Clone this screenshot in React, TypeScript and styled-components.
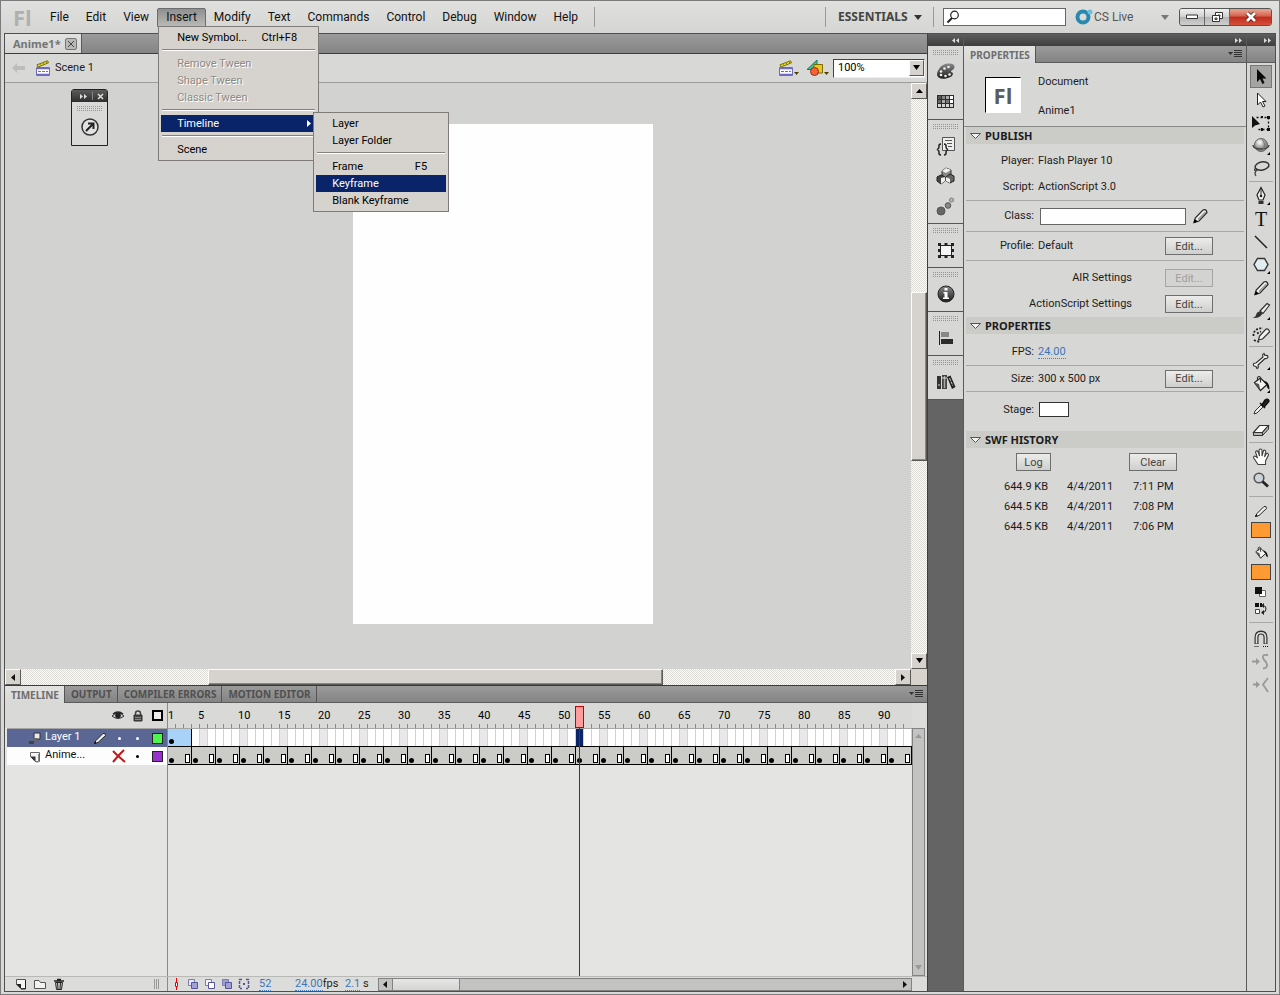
import React from "react";
import styled, { createGlobalStyle, css } from "styled-components";

const Global = createGlobalStyle`
  *, *::before, *::after { box-sizing: border-box; }
  body { margin: 0; background: #d6d6d4; }
  body, button, input, select, table {
    font-family: Roboto, "Noto Sans", sans-serif;
    font-size: 11px;
    line-height: 14px;
    color: #1c1c1c;
  }
  button { margin: 0; padding: 0; border: 0; background: none; cursor: pointer; }
  ul, h1, h2, p { margin: 0; padding: 0; list-style: none; }
  svg { flex: none; display: block; }
`;

const checker = "repeating-conic-gradient(#fdfdfb 0 25%, #dcdad4 0 50%) 0 0 / 2px 2px";
const boldFace = css`
  font-family: "Noto Sans", sans-serif;
  font-weight: 700;
`;

/* ---------- window ---------- */

const Window = styled.div`
  min-height: 100vh;
  display: flex;
  flex-direction: column;
  border: 1px solid #7b7b7b;
  background: #d8d8d6;
`;

const Header = styled.header`
  display: flex;
  align-items: center;
  height: 32px;
  background: linear-gradient(#e0e0de, #d5d5d3);
`;

const Logo = styled.span`
  ${boldFace}
  width: 40px;
  padding-left: 12px;
  font-family: "Open Sans", sans-serif;
  font-size: 22px;
  line-height: 26px;
  color: #b0b0b0;
`;

const MenuBar = styled.nav`
  display: flex;
  align-items: center;
  height: 20px;
  padding-right: 8px;
  border-right: 1px solid #9a9a9a;
`;

const MenuSlot = styled.div`
  position: relative;
  margin-right: -1px;
`;

const MenuButton = styled.button<{ $open?: boolean }>`
  height: 19px;
  padding: 0 8px;
  border: 1px solid ${(p) => (p.$open ? "#6c6c6c" : "transparent")};
  border-radius: 2px 2px 0 0;
  background: ${(p) => (p.$open ? "linear-gradient(#8f8f8f, #b9b9b7)" : "none")};
  font-size: 12px;
  line-height: 16px;
  color: #111;
`;

const Popup = styled.ul<{ $sub?: boolean }>`
  position: absolute;
  z-index: 5;
  top: ${(p) => (p.$sub ? "-3px" : "18px")};
  left: ${(p) => (p.$sub ? "152px" : "1px")};
  width: ${(p) => (p.$sub ? "136px" : "161px")};
  padding: 2px;
  border: 1px solid #7e7b78;
  background: #d6d3ce;
`;

const PopupItem = styled.li`
  position: relative;
`;

const PopupButton = styled.button<{ $active?: boolean }>`
  display: flex;
  align-items: center;
  justify-content: space-between;
  width: 100%;
  height: 17px;
  padding: 0 19px 0 16px;
  background: ${(p) => (p.$active ? "#0a246a" : "none")};
  color: ${(p) => (p.$active ? "#fff" : "#000")};
  line-height: 17px;
  &:disabled { color: #8c8a86; text-shadow: 1px 1px 0 #fff; }
  svg { margin-right: -14px; }
`;

const PopupRule = styled.li`
  height: 2px;
  margin: 3px 1px 4px;
  border-top: 1px solid #85827e;
  border-bottom: 1px solid #fff;
`;

const HeaderRight = styled.div`
  display: flex;
  align-items: center;
  height: 32px;
  margin-left: auto;
  padding-right: 7px;
`;

const Workspace = styled.button`
  ${boldFace}
  display: flex;
  align-items: center;
  justify-content: space-between;
  width: 109px;
  height: 20px;
  padding: 0 11px 0 12px;
  border-left: 1px solid #9a9a9a;
  border-right: 1px solid #9a9a9a;
  font-size: 12px;
  color: #444;
`;

const SearchBox = styled.label`
  display: flex;
  align-items: center;
  width: 123px;
  height: 18px;
  margin: 0 9px;
  padding-left: 2px;
  border: 1px solid #666;
  background: #fff;
  input { flex: 1; min-width: 0; border: 0; outline: 0; background: none; }
`;

const LiveButton = styled.button`
  display: flex;
  align-items: center;
  width: 94px;
  height: 20px;
  margin-right: 10px;
  font-size: 12px;
  color: #555;
  svg:last-child { margin-left: auto; }
`;

const WindowButtons = styled.div`
  display: flex;
  height: 18px;
  border: 1px solid #555;
  border-radius: 3px;
  overflow: hidden;
`;

const WindowButton = styled.button<{ $close?: boolean }>`
  display: flex;
  align-items: center;
  justify-content: center;
  width: ${(p) => (p.$close ? "41px" : "25px")};
  border-right: ${(p) => (p.$close ? "0" : "1px solid #666")};
  background: ${(p) =>
    p.$close
      ? "linear-gradient(#e59a88 0 10%, #d4614c 45%, #bf2c1c 50%, #d5503a)"
      : "linear-gradient(#efefef, #d2d2d2 48%, #b4b4b4 50%, #cfcfcf)"};
`;

const Body = styled.div`
  flex: 1;
  display: flex;
  margin: 0 3px 2px;
  border: 1px solid #4f4f4f;
`;

/* ---------- document ---------- */

const Main = styled.main`
  flex: 1;
  min-width: 0;
  display: flex;
  flex-direction: column;
  border-right: 1px solid #3f3f3f;
`;

const Strip = styled.div<{ $tall?: boolean }>`
  display: flex;
  height: ${(p) => (p.$tall ? "20px" : "17px")};
  border-bottom: 1px solid ${(p) => (p.$tall ? "#3c3c3c" : "#5c5c5c")};
  background: linear-gradient(#9b9b9b, #848484);
`;

const DocTab = styled.div`
  ${boldFace}
  display: flex;
  align-items: center;
  gap: 4px;
  height: 19px;
  padding: 0 4px 0 8px;
  border-right: 1px solid #5a5a5a;
  background: linear-gradient(#e2e2e0, #d6d6d4);
  color: #757575;
`;

const CloseTab = styled.button`
  display: flex;
  align-items: center;
  justify-content: center;
  width: 12px;
  height: 12px;
  border: 1px solid #777;
  border-radius: 2px;
  background: #b9b9b7;
`;

const SceneBar = styled.div`
  display: flex;
  align-items: center;
  height: 29px;
  padding: 0 2px 0 6px;
  border-bottom: 1px solid #9c9c9c;
  background: #d8d8d6;
`;

const SceneName = styled.button`
  display: flex;
  align-items: center;
  gap: 4px;
  margin: 0 auto 0 10px;
`;

const IconButton = styled.button`
  display: flex;
  align-items: center;
  justify-content: center;
  width: 24px;
  height: 22px;
  margin-right: 4px;
`;

const ZoomBox = styled.div`
  display: flex;
  width: 92px;
  height: 19px;
  border: 1px solid #444;
  border-right-color: #eee;
  border-bottom-color: #eee;
  background: #fff;
  select {
    flex: 1;
    appearance: none;
    border: 0;
    padding: 0 0 0 4px;
    outline: 0;
    background: #fff;
    color: #000;
  }
`;

const bevel = css`
  border: 1px solid;
  border-color: #fbfbf8 #5b5955 #5b5955 #fbfbf8;
  background: #d6d3ce;
`;

const BevelButton = styled.button<{ $narrow?: boolean }>`
  ${bevel}
  flex: none;
  display: flex;
  align-items: center;
  justify-content: center;
  width: ${(p) => (p.$narrow ? "15px" : "16px")};
  height: 16px;
`;

const CanvasGrid = styled.div`
  flex: 1;
  display: grid;
  grid-template: 1fr 16px / 1fr 16px;
`;

const Canvas = styled.div`
  position: relative;
  display: flex;
  justify-content: center;
  padding: 41px 0 45px 90px;
  background: #d2d3d1;
`;

const Stage = styled.div`
  width: 300px;
  height: 500px;
  background: #fdfefd;
`;

const ScrollBar = styled.div<{ $vertical?: boolean }>`
  display: flex;
  flex-direction: ${(p) => (p.$vertical ? "column" : "row")};
  background: ${checker};
`;

const Spacer = styled.span<{ $grow: number }>`
  flex: ${(p) => p.$grow} 1 0;
`;

const Thumb = styled(Spacer)`
  ${bevel}
  box-shadow: inset -1px -1px #8a8783;
`;

const Corner = styled.div`
  background: #d8d3cd;
`;

const FloatPanel = styled.div`
  position: absolute;
  top: 6px;
  left: 66px;
  width: 37px;
  height: 57px;
  border: 1px solid #222;
  border-radius: 3px 3px 0 0;
  background: #d9d9d7;
`;

const FloatBar = styled.div`
  display: flex;
  align-items: center;
  justify-content: flex-end;
  gap: 4px;
  height: 12px;
  padding-right: 3px;
  background: linear-gradient(#5c5c5c, #2e2e2e);
`;

const Grip = styled.div`
  height: 5px;
  margin: 4px 4px 0;
  background: conic-gradient(#959593 25%, transparent 0) 0 0 / 2px 2px;
`;

const FloatBody = styled.div`
  display: flex;
  justify-content: center;
  padding-top: 6px;
`;

/* ---------- timeline ---------- */

const Timeline = styled.section`
  border-top: 1px solid #3a3a3a;
  background: #dcdcda;
`;

const Tab = styled.button<{ $active?: boolean }>`
  ${boldFace}
  height: ${(p) => (p.$active ? "17px" : "16px")};
  padding: 0 5px 0 6px;
  border-right: 1px solid #555;
  background: ${(p) => (p.$active ? "linear-gradient(#e2e2e0, #d8d8d6)" : "none")};
  font-size: 10px;
  line-height: 16px;
  color: ${(p) => (p.$active ? "#6e6e6e" : "#505050")};
`;

const PanelMenu = styled.button`
  display: flex;
  align-items: center;
  margin-left: auto;
  padding-right: 4px;
`;

const TimelineBody = styled.div`
  display: flex;
`;

const LayerColumn = styled.div`
  width: 163px;
  padding-left: 2px;
  border-right: 1px solid #8a8a8a;
  background: linear-gradient(#d9d9d7 25px, #e4e4e2 25px);
`;

const LayerHead = styled.div`
  display: grid;
  grid-template-columns: 1fr 20px 19px 20px;
  align-items: center;
  justify-items: center;
  height: 26px;
  border-bottom: 1px solid #a5a5a5;
`;

const LayerRow = styled.div<{ $active?: boolean }>`
  display: grid;
  grid-template-columns: 38px 1fr 20px 18px 19px 20px;
  align-items: center;
  justify-items: center;
  height: 18px;
  background: ${(p) => (p.$active ? "#5a6794" : "#fdfdfd")};
  color: ${(p) => (p.$active ? "#fff" : "#111")};
  line-height: 16px;
  span { justify-self: start; height: 18px; }
  svg:first-child { justify-self: end; margin-right: 4px; }
`;

const Dot = styled.i<{ $c: string }>`
  width: 3px;
  height: 3px;
  border-radius: 2px;
  background: ${(p) => p.$c};
`;

const Swatch = styled.i<{ $c: string }>`
  width: 11px;
  height: 11px;
  border: 1px solid #222;
  background: ${(p) => p.$c};
`;

const Frames = styled.div`
  position: relative;
  flex: 1;
  min-width: 0;
  overflow: hidden;
`;

const Ruler = styled.div`
  display: flex;
  height: 26px;
  padding-top: 6px;
  border-bottom: 1px solid #a5a5a5;
  background:
    repeating-linear-gradient(90deg, transparent 0 7px, #8b8b8b 7px 8px) 0 21px / 736px 4px no-repeat,
    #d9d9d7;
  color: #000;
`;

const Mark = styled.span<{ $first?: boolean }>`
  flex: none;
  width: ${(p) => (p.$first ? "30px" : "40px")};
`;

const FrameRow = styled.div`
  display: flex;
  height: 18px;
  border-bottom: 1px solid #000;
  background:
    repeating-linear-gradient(90deg, transparent 0 7px, #d2d2ce 7px 8px),
    repeating-linear-gradient(90deg, #fff 0 32px, #eae7eb 32px 40px);
`;

const Tween = styled.div`
  display: flex;
  align-items: flex-end;
  width: 24px;
  padding: 0 0 2px 1px;
  border-right: 1px solid #000;
  background: #a9d2f8;
`;

const SelectedFrame = styled.i`
  width: 7px;
  margin-left: 384px;
  background: #0a246a;
`;

const Key = styled.i`
  width: 5px;
  height: 5px;
  border-radius: 3px;
  background: #000;
`;

const SpanRow = styled.div`
  display: flex;
  height: 18px;
  border-bottom: 1px solid #000;
`;

const FrameSpan = styled.div`
  flex: none;
  display: flex;
  align-items: flex-end;
  justify-content: space-between;
  width: 24px;
  padding: 0 1px 1px;
  border-right: 1px solid #000;
  background: #cbccc8;
`;

const EndMark = styled.i`
  width: 5px;
  height: 9px;
  border: 1px solid #000;
  background: #fff;
`;

const EmptyFrames = styled.div`
  height: 211px;
  background: #e4e4e2;
`;

const Playhead = styled.div`
  position: absolute;
  top: 3px;
  bottom: 0;
  left: 407px;
  width: 9px;
  background: linear-gradient(#c40000, #c40000) 4px 0 / 1px 100% no-repeat;
  &::before {
    content: "";
    display: block;
    height: 22px;
    border: 1px solid #c40000;
    background: #ff9c9c;
  }
`;

const SlimScroll = styled.div`
  display: flex;
  flex-direction: column;
  align-items: center;
  justify-content: space-between;
  width: 13px;
  margin: 25px 2px 0 0;
  padding: 5px 0;
  border: 1px solid #828282;
  background: #c3c3c1;
`;

const TimelineFoot = styled.footer`
  display: flex;
  align-items: center;
  height: 15px;
  border-top: 1px solid #b9b9b7;
  background: #dcdcda;
`;

const FootTools = styled.div<{ $frames?: boolean }>`
  display: flex;
  align-items: center;
  gap: ${(p) => (p.$frames ? "5px" : "7px")};
  width: ${(p) => (p.$frames ? "91px" : "163px")};
  height: 14px;
  padding: ${(p) => (p.$frames ? "0 0 0 4px" : "0 7px 0 10px")};
  border-right: ${(p) => (p.$frames ? "0" : "1px solid #8a8a8a")};
  button { display: flex; }
  & > svg { margin-left: auto; }
`;

const Readout = styled.span<{ $w: number }>`
  width: ${(p) => p.$w}px;
  line-height: 12px;
`;

const HotText = styled.a`
  border-bottom: 1px dotted #4a80c0;
  color: #3c76bc;
  text-decoration: none;
`;

const FrameScroll = styled.div`
  flex: 1;
  display: flex;
  align-items: center;
  height: 13px;
  margin-right: 15px;
  padding: 0 4px;
  border: 1px solid #828282;
  background: #c3c3c1;
`;

const FrameThumb = styled.span`
  width: 68px;
  height: 11px;
  margin: 0 auto 0 5px;
  border: solid #828282;
  border-width: 0 1px;
  background: linear-gradient(#e6e6e6, #d5d5d3);
`;

/* ---------- docked columns ---------- */

const Dock = styled.aside<{ $w: number; $last?: boolean }>`
  flex: none;
  display: flex;
  flex-direction: column;
  width: ${(p) => p.$w}px;
  border-right: ${(p) => (p.$last ? "0" : "1px solid #5a5a5a")};
  background: #d7d7d5;
`;

const DockBar = styled.div`
  display: flex;
  align-items: center;
  justify-content: flex-end;
  height: 12px;
  padding-right: 3px;
  background: linear-gradient(#5e5e5e, #3d3d3d);
`;

const RailGroup = styled.div`
  display: flex;
  flex-direction: column;
  padding-bottom: 2px;
  border-bottom: 1px solid #555;
`;

const RailGrip = styled(Grip)`
  margin: 4px 4px 2px;
`;

const RailButton = styled.button`
  display: flex;
  align-items: center;
  justify-content: center;
  height: 30px;
`;

const RailRest = styled.div`
  flex: 1;
  background: #646464;
`;

const DocInfo = styled.div`
  display: flex;
  height: 64px;
  padding: 14px 0 0 21px;
  border-bottom: 1px solid #8a8a8a;
`;

const DocLogo = styled.div`
  ${boldFace}
  display: flex;
  align-items: center;
  justify-content: center;
  width: 36px;
  height: 36px;
  margin-right: 17px;
  border: 1px solid #fff;
  border-color: #000 #fff #fff #000;
  background: #fff;
  font-family: "Open Sans", sans-serif;
  font-size: 22px;
  color: #5c5c5c;
`;

const DocNames = styled.div`
  display: flex;
  flex-direction: column;
  gap: 15px;
  margin-top: -2px;
`;

const SectionHead = styled.button`
  ${boldFace}
  display: flex;
  align-items: center;
  gap: 3px;
  height: 17px;
  margin: 0 2px;
  padding-left: 3px;
  background: #cbcbc8;
`;

const Block = styled.div<{ $end?: boolean }>`
  display: flex;
  flex-direction: column;
  margin: 0 2px;
  padding: 4px 0 ${(p) => (p.$end ? "4px" : "0")};
`;

const Field = styled.div<{ $h: number; $rule?: boolean; $wide?: boolean; $aside?: number }>`
  display: grid;
  grid-template-columns: ${(p) => (p.$wide ? "166px" : "68px 1fr")} ${(p) => p.$aside ?? 79}px;
  column-gap: ${(p) => (p.$wide ? "33px" : "4px")};
  align-items: center;
  height: ${(p) => p.$h}px;
  border-bottom: ${(p) => (p.$rule ? "1px solid #a9a7a7" : "0")};
  & > label, & > b { font-weight: 400; text-align: right; }
`;

const ClassInput = styled.input`
  width: 100%;
  height: 17px;
  margin-left: 2px;
  padding: 0 3px;
  border: 1px solid #666;
  background: #fdfefd;
`;

const PushButton = styled.button<{ $w?: number }>`
  width: ${(p) => p.$w ?? 48}px;
  height: 18px;
  border: 1px solid #6e6e6e;
  background: linear-gradient(#ececea, #cfcfcd);
  line-height: 15px;
  color: #444;
  &:disabled { border-color: #a5a5a3; background: #d3d3d1; color: #a0a09e; }
`;

const StageColor = styled.button`
  width: 30px;
  height: 15px;
  margin-left: 1px;
  border: 1px solid #333;
  background: #fff;
`;

const HistoryButtons = styled.div`
  display: flex;
  gap: 78px;
  padding: 1px 0 6px 50px;
`;

const History = styled.table`
  width: 190px;
  margin-left: 38px;
  border-collapse: collapse;
  td { height: 20px; padding: 0; }
  td:first-child { width: 63px; }
  td:nth-child(2) { width: 66px; }
`;

const ToolTop = styled.div`
  height: 17px;
  border-bottom: 1px solid #5c5c5c;
  background: linear-gradient(#9b9b9b, #848484);
`;

const ToolGroup = styled.div<{ $gap?: number; $end?: boolean }>`
  display: flex;
  flex-direction: column;
  align-items: center;
  margin: 0 2px;
  padding: ${(p) => (p.$end ? "4px" : "2px")} 0 ${(p) => p.$gap ?? 1}px;
  border-bottom: ${(p) => (p.$end ? "0" : "1px solid #a9a7a7")};
`;

const ToolButton = styled.button<{ $active?: boolean; $h?: number }>`
  display: flex;
  align-items: center;
  justify-content: center;
  width: 22px;
  height: ${(p) => p.$h ?? 23}px;
  border: 1px solid ${(p) => (p.$active ? "#777" : "transparent")};
  background: ${(p) => (p.$active ? "#a4a4a2" : "none")};
`;

const ColorSwatch = styled.button`
  width: 20px;
  height: 16px;
  margin: 0 0 3px;
  border: 1px solid #444;
  background: #ff9a33;
`;

/* ---------- drawings ---------- */

type Kids = { children: React.ReactNode; w?: number; h?: number };
const Svg = ({ children, w = 20, h = 20 }: Kids) => (
  <svg width={w} height={h} viewBox={`0 0 ${w} ${h}`} fill="none" stroke="none" aria-hidden="true">
    {children}
  </svg>
);

const Caret = ({ c = "#333", w = 8 }: { c?: string; w?: number }) => (
  <Svg w={w} h={5}><path d={`M0 0H${w}L${w / 2} 5Z`} fill={c} /></Svg>
);
const ArrowUp = ({ c = "#000" }: { c?: string }) => (
  <Svg w={7} h={4}><path d="M0 4H7L3.500 0Z" fill={c} /></Svg>
);
const ArrowLeft = () => <Svg w={4} h={7}><path d="M4 0V7L0 3.500Z" fill="#111" /></Svg>;
const ArrowRight = ({ c = "#111" }: { c?: string }) => (
  <Svg w={4} h={7}><path d="M0 0V7L4 3.500Z" fill={c} /></Svg>
);
const Collapse = ({ left }: { left?: boolean }) => (
  <Svg w={8} h={5}>
    <path d={left ? "M3 0V5L0 2.500ZM7 0V5L4 2.500Z" : "M0 0V5L3 2.500ZM4 0V5L7 2.500Z"} fill="#ddd" />
  </Svg>
);
const MenuLines = () => (
  <Svg w={14} h={8}><path d="M0 2H5L2.500 5Z" fill="#333" /><path d="M6 .5H14M6 2.500H14M6 4.500H14M6 6.500H14" stroke="#333" /></Svg>
);
const Clapper = () => (
  <Svg w={15} h={17}>
    <path d="M1 4.800L11.500 .8L12.500 2.800L2 7Z" fill="#f0e420" stroke="#6a6000" strokeWidth=".9" />
    <path d="M4 4.200L5 5.500M7 3L8 4.300M10 1.800L11 3" stroke="#6a6000" strokeWidth=".8" />
    <path d="M.5 7.500H13.500V15.500H.5Z" fill="#fafaff" stroke="#6c6cc4" />
    <path d="M1 8.500H13M1 14.500H13" stroke="#6c6cc4" strokeWidth="1.400" />
    <path d="M2 11.500H12" stroke="#6c6cc4" strokeDasharray="3 1" />
  </Svg>
);
const Shapes = () => (
  <Svg w={18} h={18}>
    <path d="M1 10.500L11 1V10.500Z" fill="#3cc39a" stroke="#1d7a60" />
    <path d="M8 5.500H16.500V14H8Z" fill="#e8c820" stroke="#7e6900" />
    <circle cx="8.500" cy="12.500" r="4" fill="#f4623a" stroke="#9c2c10" />
  </Svg>
);
const DropMark = () => <Svg w={5} h={14}><path d="M0 11H5L2.500 14Z" fill="#4a4300" /></Svg>;
const Triangle = () => (
  <Svg w={13} h={9}><path d="M1.500 2.500H11.500L6.500 7.500Z" fill="#f2f2f2" stroke="#555" /></Svg>
);
const More = () => <path d="M19 16V19H16Z" fill="#000" />;

const pencilShape = (
  <>
    <path d="M4 16.500L5.200 12L13 4Q16 2.500 17 6.500L9 15Z" fill="#f2f2f2" stroke="#2a2a2a" strokeWidth="1.200" />
    <path d="M3.500 17L4.800 13L8 15.500Z" fill="#000" />
    <path d="M8 13.500L15.500 6" stroke="#999" strokeWidth="1.500" />
  </>
);
const bucketShape = (
  <>
    <path d="M3.500 8.500L9.500 4L16 10.500L9.500 16.500Z" fill="#f4f4f4" stroke="#222" strokeWidth="1.200" />
    <path d="M9.500 8.500V3.500Q8 1.500 6.500 3.500V7" stroke="#333" strokeWidth="1.200" />
    <path d="M12.500 6.500Q18.500 7.500 18.500 15.500Q15.500 14 15.500 10.500Z" fill="#111" />
    <path d="M3.500 8.500L9.500 16.500L8 10Z" fill="#555" />
  </>
);
const P = {
  select: <path d="M6 2V15L9 12L11.500 17L13.500 16L11.500 11.500H15.500Z" fill="#0a0a0a" />,
  subselect: <path d="M6.500 3V15L9.500 12L12 17L14 16L11.500 11.500H15Z" fill="#fff" stroke="#222" />,
  transform: (
    <>
      <path d="M5.500 4.500H17.500V16.500H6" stroke="#111" strokeWidth="1.300" strokeDasharray="2 2" />
      <path d="M16 3H19V6H16ZM10 3H12V5H10ZM16 15H19V18H16ZM10 15H12V18H10Z" fill="#111" />
      <path d="M1 3V15L4 12.500L9 11Z" fill="#111" />
    </>
  ),
  sphere: (
    <>
      <circle cx="10" cy="9" r="6.500" fill="url(#ball)" stroke="#666" />
      <path d="M2 9Q2 13 10 13Q17.500 13 18 9" stroke="#444" strokeWidth="1.400" />
      <path d="M11 3Q16 9 11 15.500" stroke="#777" /><More />
    </>
  ),
  lasso: (
    <>
      <ellipse cx="11" cy="7" rx="7" ry="4" transform="rotate(-12 11 7)" stroke="#333" strokeWidth="1.500" />
      <path d="M5 9Q2 11 5 12Q7 11 5 10M5 12Q3 14 5 17" stroke="#333" strokeWidth="1.200" />
    </>
  ),
  pen: (
    <>
      <path d="M10 1.500L6 9L8 14H12L14 9Z" fill="#f4f4f4" stroke="#222" strokeWidth="1.200" />
      <path d="M10 3V9" stroke="#222" /><circle cx="10" cy="10" r="1.300" fill="#222" />
      <path d="M7.500 15H12.500V18H7.500Z" fill="#333" /><More />
    </>
  ),
  line: <path d="M4 4L16 16" stroke="#222" strokeWidth="1.500" />,
  poly: <><path d="M6.500 3.500H13.500L17 9.500L13.500 15.500H6.500L3 9.500Z" fill="#e2ecf1" stroke="#333" strokeWidth="1.400" /><More /></>,
  pencil: pencilShape,
  brush: (
    <>
      <path d="M9 10L16 2.500L18.500 4L12 12.500Z" fill="#eee" stroke="#333" strokeWidth="1.200" />
      <path d="M1.500 17Q5 16 5.500 12.500Q8 9 11.500 12Q10 17.500 1.500 17Z" fill="#333" /><More />
    </>
  ),
  deco: (
    <>
      <path d="M7.500 16L8.500 12L15 5Q18 4.500 18.500 8L11.500 15Z" fill="#f0f0f0" stroke="#333" strokeWidth="1.200" />
      <path d="M2.500 12Q2 4.500 12 4M3 16Q6 18 9 17.500M6 9.500L10 7.500" stroke="#222" strokeWidth="1.800" strokeDasharray="2 1.500" />
    </>
  ),
  bone: (
    <>
      <path d="M3 15Q1 12 5 12L12 6Q11 3 13 2.500L14 4.500Q17 4 17 6Q16 8 14 7.500L7 14Q8 17 6 17.500L5 15.500Z" fill="#fafafa" stroke="#333" strokeWidth="1.200" /><More />
    </>
  ),
  bucket: <>{bucketShape}<More /></>,
  dropper: (
    <>
      <path d="M3 17L4 14L10 8L12 10L6 16Z" fill="#eee" stroke="#333" />
      <path d="M9 6L14 11M11 8L14 3Q17 1 18 4Q17 6 13 10Z" fill="#222" stroke="#111" strokeWidth="1.500" />
    </>
  ),
  eraser: (
    <>
      <path d="M2.500 12.500L8.500 5.500H17.500L11.500 12.500Z" fill="#fafafa" stroke="#333" strokeWidth="1.200" />
      <path d="M2.500 12.500V15.500H11.500V12.500ZM11.500 12.500V15.500L17.500 9V5.500Z" fill="#b5b5b5" stroke="#333" />
    </>
  ),
  hand: (
    <path d="M7 17.500L2.500 10.500Q2.500 8.500 5 9.500L6.500 11L4.500 5Q5.500 3 7 4.500L8.500 9L8 3Q9.500 1 11 3V9L12.500 3.500Q14 2.500 14.800 4.500L13.500 10L15.500 6.500Q17.500 6 17.500 8L14.500 14V17.500Z" fill="#fff" stroke="#444" strokeWidth="1.100" />
  ),
  zoom: (
    <>
      <circle cx="8" cy="8" r="4.800" fill="#ccd6da" stroke="#555" strokeWidth="1.600" />
      <path d="M11.500 11.500L17 16.500" stroke="#222" strokeWidth="2.800" />
    </>
  ),
  magnet: (
    <>
      <path d="M5.500 15V8.500Q5.500 3.500 10 3.500Q14.500 3.500 14.500 8.500V15" stroke="#333" strokeWidth="4" />
      <path d="M5.500 14.500V8.500Q5.500 3.800 10 3.800Q14.500 3.800 14.500 8.500V14.500" stroke="#ddd" strokeWidth="1.600" />
      <path d="M3.500 17.500H8M12 17.500H17" stroke="#111" strokeDasharray="1 1" />
    </>
  ),
  smooth: (
    <>
      <path d="M1 9.500H7" stroke="#999" strokeWidth="2" /><path d="M5 6V13L9 9.500Z" fill="#999" />
      <path d="M17 3Q11 2 12 6Q13 8 15 10Q18 16 12 16.500" stroke="#999" strokeWidth="1.800" />
    </>
  ),
  straighten: (
    <>
      <path d="M2 9.500H7" stroke="#999" strokeWidth="2" /><path d="M5 6V13L9 9.500Z" fill="#999" />
      <path d="M17 3L12 9.500L17 17" stroke="#999" strokeWidth="1.800" />
    </>
  ),
};
const tool = (n: keyof typeof P) => <Svg>{P[n]}</Svg>;

const GlyphT = styled.b`
  font: 400 20px/20px "Liberation Serif", serif;
  color: #111;
`;

const railIcons: Record<string, React.ReactNode> = {
  Color: (
    <>
      <path d="M3 7Q6 1.500 13 1.500Q19 1.500 18.500 5.500Q18 7.500 15.500 8.500Q14 9.500 17 11Q17.500 15 10 16.500Q2 17.500 1 13Q1 9.500 3 7Z" fill="url(#dark)" />
      <circle cx="12.500" cy="5" r="1.300" fill="#eee" /><circle cx="8.500" cy="6.500" r="1.300" fill="#eee" />
      <circle cx="5" cy="9.500" r="1.300" fill="#eee" /><circle cx="5" cy="13" r="1.300" fill="#eee" />
      <circle cx="9.500" cy="14" r="1.300" fill="#eee" /><circle cx="13.500" cy="12.500" r="1.300" fill="#eee" />
    </>
  ),
  Swatches: (
    <>
      <path d="M1 3H18V16H1Z" fill="#2d2d2d" />
      <path d="M2 4h3v3H2z" fill="#555" /><path d="M6 4h3v3H6z" fill="#888" /><path d="M10 4h3v3h-3zM6 8h3v3H6z" fill="#aaa" />
      <path d="M14 4h3v3h-3zM14 8h3v3h-3z" fill="#fff" /><path d="M2 8h3v3H2z" fill="#666" /><path d="M10 8h3v3h-3z" fill="#777" />
      <path d="M2 12h3v3H2zM6 12h3v3H6zM10 12h3v3h-3zM14 12h3v3h-3z" fill="#d5d5d5" />
    </>
  ),
  "Code Snippets": (
    <>
      <path d="M6.500 1.500H18.500V14.500H6.500Z" fill="#eee" stroke="#555" />
      <path d="M9 4.500H16M11 7.500H16M12 10.500H16" stroke="#555" />
      <path d="M5 8Q2.500 8 3 11Q3 13 1 13.500Q3 14 3 16Q2.500 19 5 19M8 8Q10.500 8 10 11Q10 13 12 13.500Q10 14 10 16Q10.500 19 8 19" stroke="#222" strokeWidth="1.500" />
    </>
  ),
  Components: (
    <>
      <path d="M6 5L10 2L15 4V10L10 12L6 9Z" fill="#888" stroke="#333" /><path d="M6 5L10 7L15 4L10 2Z" fill="#eee" />
      <path d="M1 11L5 9L9 11V15L5 18L1 15Z" fill="#444" stroke="#222" /><path d="M5 12L9 11V15L5 18Z" fill="#eee" />
      <path d="M10 11L14 8L18 10V15L14 17L10 15Z" fill="#666" stroke="#222" /><path d="M10 11L14 13V17L10 15Z" fill="#eee" />
    </>
  ),
  "Motion Presets": (
    <>
      <circle cx="5" cy="15" r="4" fill="#666" stroke="#555" /><circle cx="12" cy="9.500" r="2.800" fill="#888" stroke="#555" />
      <circle cx="15.500" cy="4" r="2" fill="#bbb" stroke="#777" />
    </>
  ),
  Transform: (
    <>
      <path d="M4.500 5.500H15.500V15.500H4.500Z" fill="#f6f6f6" stroke="#222" />
      <path d="M2 3H5V6H2ZM8.500 3H11.500V5H8.500ZM15 3H18V6H15ZM2 15H5V18H2ZM8.500 16H11.500V18H8.500ZM15 15H18V18H15ZM2 9H4V12H2ZM16 9H18V12H16Z" fill="#222" />
    </>
  ),
  Info: (
    <>
      <circle cx="10" cy="10" r="8" fill="url(#dark)" stroke="#222" />
      <path d="M8.500 4H11.500V6.500H8.500ZM7.500 8H11.500V13.500H13V15H7V13.500H8.500V9.500H7.500Z" fill="#fff" />
    </>
  ),
  Align: (
    <>
      <path d="M3.500 3V17" stroke="#222" /><path d="M5 4H13V9H5Z" fill="#888" /><path d="M5 11H17V16H5Z" fill="#2c2c2c" />
    </>
  ),
  Library: (
    <>
      <path d="M1 4H5V17H1Z" fill="#333" /><path d="M6 3H11V17H6Z" fill="#444" /><path d="M8.500 4V16" stroke="#aaa" strokeWidth="1.500" />
      <path d="M11 5L14.500 3.500L19.500 15L16 17Z" fill="#222" /><path d="M13.500 6L17 14" stroke="#ccc" strokeDasharray="3 1" /><path d="M2 13H4M6 6H11" stroke="#ddd" />
    </>
  ),
};

const railGroups = [
  ["Color", "Swatches"],
  ["Code Snippets", "Components", "Motion Presets"],
  ["Transform"],
  ["Info"],
  ["Align"],
  ["Library"],
];

const toolGroups: (keyof typeof P | "text")[][] = [
  ["select", "subselect", "transform", "sphere", "lasso"],
  ["pen", "text", "line", "poly", "pencil", "brush", "deco"],
  ["bone", "bucket", "dropper", "eraser"],
  ["hand", "zoom"],
];

const SmallPencil = ({ light }: { light?: boolean }) => (
  <Svg w={14} h={14}>
    <path d="M1.500 12.500L3 9.500L10 2.500Q12.500 1.500 12.500 4.500L5 11.500Z" fill={light ? "#f0f0f0" : "#999"} stroke="#222" />
    <path d="M1 13L2 10.500L3.500 12Z" fill="#000" />
  </Svg>
);
const OnionSquares = ({ back, front }: { back: string; front: string }) => (
  <Svg w={12} h={12}>
    <path d="M1.500 1.500H7.500V7.500H1.500Z" fill={back} stroke="#7b7bb0" />
    <path d="M4.500 4.500H10.500V10.500H4.500Z" fill={front} stroke="#55559a" />
  </Svg>
);

/* ---------- sections ---------- */

const menus = ["File", "Edit", "View", "Insert", "Modify", "Text", "Commands", "Control", "Debug", "Window", "Help"];

function InsertMenu() {
  return (
    <Popup>
      <PopupItem><PopupButton>New Symbol...<span>Ctrl+F8</span></PopupButton></PopupItem>
      <PopupRule />
      {["Remove Tween", "Shape Tween", "Classic Tween"].map((t) => (
        <PopupItem key={t}><PopupButton disabled>{t}</PopupButton></PopupItem>
      ))}
      <PopupRule />
      <PopupItem>
        <PopupButton $active>Timeline<ArrowRight c="#fff" /></PopupButton>
        <Popup $sub>
          <PopupItem><PopupButton>Layer</PopupButton></PopupItem>
          <PopupItem><PopupButton>Layer Folder</PopupButton></PopupItem>
          <PopupRule />
          <PopupItem><PopupButton>Frame<span>F5</span></PopupButton></PopupItem>
          <PopupItem><PopupButton $active>Keyframe</PopupButton></PopupItem>
          <PopupItem><PopupButton>Blank Keyframe</PopupButton></PopupItem>
        </Popup>
      </PopupItem>
      <PopupRule />
      <PopupItem><PopupButton>Scene</PopupButton></PopupItem>
    </Popup>
  );
}

function TopBar() {
  return (
    <Header>
      <Logo>Fl</Logo>
      <MenuBar>
        {menus.map((m) => (
          <MenuSlot key={m}>
            <MenuButton $open={m === "Insert"}>{m}</MenuButton>
            {m === "Insert" && <InsertMenu />}
          </MenuSlot>
        ))}
      </MenuBar>
      <HeaderRight>
        <Workspace>ESSENTIALS<Caret /></Workspace>
        <SearchBox>
          <Svg w={14} h={14}>
            <circle cx="8.500" cy="5" r="3.800" stroke="#222" strokeWidth="1.200" />
            <path d="M6 8L1.500 12.500" stroke="#222" strokeWidth="2" />
          </Svg>
          <input type="text" aria-label="Search" />
        </SearchBox>
        <LiveButton>
          <Svg w={19} h={18}>
            <circle cx="8" cy="9" r="5.500" stroke="#2789ae" strokeWidth="4" />
            <circle cx="15" cy="4" r="2.500" fill="#6cc0dc" />
          </Svg>
          CS Live
          <Caret c="#777" />
        </LiveButton>
        <WindowButtons>
          <WindowButton aria-label="Minimize">
            <Svg w={13} h={6}><path d="M.5 1H11.500V4.500H.5Z" fill="#fff" stroke="#333" /></Svg>
          </WindowButton>
          <WindowButton aria-label="Restore">
            <Svg w={13} h={12}>
              <path d="M4.500 1.500H11.500V7.500H4.500Z" fill="#fff" stroke="#333" /><path d="M7 4H9V5.500H7Z" stroke="#333" />
              <path d="M1.500 4.500H8.500V10.500H1.500Z" fill="#fff" stroke="#333" /><path d="M4 7H6V8.500H4Z" stroke="#333" />
            </Svg>
          </WindowButton>
          <WindowButton $close aria-label="Close">
            <Svg w={14} h={12}>
              <path d="M3 2L11 10M11 2L3 10" stroke="#5a1a14" strokeWidth="4.500" />
              <path d="M3 2L11 10M11 2L3 10" stroke="#fff" strokeWidth="2.800" />
            </Svg>
          </WindowButton>
        </WindowButtons>
      </HeaderRight>
    </Header>
  );
}

function DocumentArea() {
  return (
    <>
      <Strip $tall>
        <DocTab>
          Anime1*
          <CloseTab aria-label="Close document"><Svg w={8} h={8}><path d="M1 1L7 7M7 1L1 7" stroke="#444" /></Svg></CloseTab>
        </DocTab>
      </Strip>
      <SceneBar>
        <Svg w={15} h={12}><path d="M1 6L6 1V4H14V8H6V11Z" fill="#bdbdbb" /></Svg>
        <SceneName><Clapper />Scene 1</SceneName>
        <IconButton aria-label="Edit scene"><Clapper /><DropMark /></IconButton>
        <IconButton aria-label="Edit symbols"><Shapes /><DropMark /></IconButton>
        <ZoomBox>
          <select aria-label="Zoom" defaultValue="100%"><option>100%</option></select>
          <BevelButton $narrow aria-label="Show zoom levels"><Caret c="#000" w={7} /></BevelButton>
        </ZoomBox>
      </SceneBar>
      <CanvasGrid>
        <Canvas>
          <FloatPanel>
            <FloatBar><Collapse /><Svg w={1} h={8}><path d="M0 0H1V8H0Z" fill="#888" /></Svg><Svg w={7} h={7}><path d="M1 1L6 6M6 1L1 6" stroke="#ddd" strokeWidth="1.500" /></Svg></FloatBar>
            <Grip />
            <FloatBody>
              <Svg w={20} h={20}>
                <circle cx="10" cy="10" r="8" fill="#e2e2e2" stroke="#333" strokeWidth="1.500" />
                <path d="M6 14L13 7M8 6.500H13.500V12" stroke="#222" strokeWidth="2" />
              </Svg>
            </FloatBody>
          </FloatPanel>
          <Stage />
        </Canvas>
        <ScrollBar $vertical>
          <BevelButton aria-label="Scroll up"><ArrowUp /></BevelButton>
          <Spacer $grow={194} /><Thumb $grow={167} /><Spacer $grow={193} />
          <BevelButton aria-label="Scroll down"><Caret c="#000" w={7} /></BevelButton>
        </ScrollBar>
        <ScrollBar>
          <BevelButton aria-label="Scroll left"><ArrowLeft /></BevelButton>
          <Spacer $grow={187} /><Thumb $grow={454} /><Spacer $grow={233} />
          <BevelButton aria-label="Scroll right"><ArrowRight /></BevelButton>
        </ScrollBar>
        <Corner />
      </CanvasGrid>
    </>
  );
}

function TimelinePanel() {
  return (
    <Timeline>
      <Strip>
        {["TIMELINE", "OUTPUT", "COMPILER ERRORS", "MOTION EDITOR"].map((t, i) => (
          <Tab key={t} $active={i === 0}>{t}</Tab>
        ))}
        <PanelMenu aria-label="Panel menu"><MenuLines /></PanelMenu>
      </Strip>
      <TimelineBody>
        <LayerColumn>
          <LayerHead>
            <i />
            <Svg w={14} h={10}>
              <path d="M1 5Q7 -1 13 5Q7 10 1 5Z" fill="#ccc" stroke="#333" /><circle cx="7" cy="4.500" r="2.800" fill="#222" />
              <path d="M2 3Q7 -1 12 3" stroke="#222" strokeWidth="1.500" />
            </Svg>
            <Svg w={10} h={12}>
              <path d="M2.500 6V3.500Q2.500 1 5 1Q7.500 1 7.500 3.500V6" stroke="#444" strokeWidth="1.500" />
              <path d="M1 5H9V11H1Z" fill="#444" stroke="#333" /><path d="M2 7.500H8M2 9.500H8" stroke="#888" />
            </Svg>
            <Svg w={11} h={11}><path d="M1 1H10V10H1Z" fill="#eee" stroke="#000" strokeWidth="2" /></Svg>
          </LayerHead>
          <LayerRow $active>
            <Svg w={13} h={13}>
              <path d="M6 1H12V7H6Z" fill="#e8e8e8" stroke="#333" /><path d="M5 6H9V10H5Z" fill="#666" /><path d="M1 9H6V12H1Z" fill="#444" />
            </Svg>
            <span>Layer 1</span>
            <SmallPencil light />
            <Dot $c="#fff" /><Dot $c="#fff" /><Swatch $c="#4cf84c" />
          </LayerRow>
          <LayerRow>
            <Svg w={13} h={13}>
              <path d="M2.500 2.500H11.500V11.500H7.500L2.500 6.500Z" fill="#f4f4f4" stroke="#666" /><path d="M2 6.500H7.500V12Z" fill="#333" /><path d="M10.500 4V12H8" stroke="#888" />
            </Svg>
            <span>Anime...</span>
            <i />
            <Svg w={14} h={14}><path d="M1 2L5 6L13 13M12 1L7 6L1 13" stroke="#c01818" strokeWidth="2" /></Svg>
            <Dot $c="#000" /><Swatch $c="#9a30cc" />
          </LayerRow>
        </LayerColumn>
        <Frames>
          <Ruler>
            <Mark $first>1</Mark>
            {Array.from({ length: 18 }, (_, i) => <Mark key={i}>{(i + 1) * 5}</Mark>)}
          </Ruler>
          <FrameRow>
            <Tween><Key /></Tween>
            <SelectedFrame />
          </FrameRow>
          <SpanRow>
            {Array.from({ length: 31 }, (_, i) => <FrameSpan key={i}><Key /><EndMark /></FrameSpan>)}
          </SpanRow>
          <EmptyFrames />
          <Playhead />
        </Frames>
        <SlimScroll><ArrowUp c="#999" /><Caret c="#999" w={7} /></SlimScroll>
      </TimelineBody>
      <TimelineFoot>
        <FootTools>
          <button aria-label="New layer"><Svg w={12} h={12}><path d="M1.500 1.500H10.500V10.500H6L1.500 6Z" fill="#f4f4f4" stroke="#555" /><path d="M1 6H6V11Z" fill="#222" /><path d="M10.500 2V11H6" stroke="#222" /></Svg></button>
          <button aria-label="New folder"><Svg w={12} h={12}><path d="M.5 2.500H5L6.500 4.500H11.500V10.500H.5Z" fill="#f2f2f2" stroke="#555" /></Svg></button>
          <button aria-label="Delete"><Svg w={12} h={12}><path d="M2.500 4.500H9.500L8.500 11.500H3.500Z" fill="#ccc" stroke="#222" /><path d="M1 3H11M4 1.500H8" stroke="#222" strokeWidth="1.500" /><path d="M4.500 5L5 11M7.500 5L7 11" stroke="#222" /></Svg></button>
          <Svg w={6} h={10}><path d="M.5 0V10M2.500 0V10M4.500 0V10" stroke="#999" /></Svg>
        </FootTools>
        <FootTools $frames>
          <button aria-label="Center frame"><Svg w={10} h={12}><path d="M4.500 0V12" stroke="#e00" /><path d="M3.500 4.500H5.500V8.500H3.500Z" fill="#fff" stroke="#e00" /></Svg></button>
          <button aria-label="Onion skin"><OnionSquares back="#e8e8f4" front="#a0a0d4" /></button>
          <button aria-label="Onion skin outlines"><OnionSquares back="#f4f4fa" front="#fff" /></button>
          <button aria-label="Edit multiple frames"><OnionSquares back="#a0a0d4" front="#a0a0d4" /></button>
          <button aria-label="Modify markers"><Svg w={12} h={12}><path d="M4 1.500H1.500V10.500H4M8 1.500H10.500V10.500H8" stroke="#55559a" strokeWidth="1.500" strokeDasharray="3 1" /><path d="M5 5H7V7H5Z" fill="#55559a" /></Svg></button>
        </FootTools>
        <Readout $w={36}><HotText href="#frame">52</HotText></Readout>
        <Readout $w={50}><HotText href="#fps">24.00</HotText>fps</Readout>
        <Readout $w={33}><HotText href="#time">2.1</HotText> s</Readout>
        <FrameScroll><ArrowLeft /><FrameThumb /><ArrowRight /></FrameScroll>
      </TimelineFoot>
    </Timeline>
  );
}

function PropertiesPanel() {
  return (
    <Dock $w={283}>
      <DockBar><Collapse /></DockBar>
      <Strip>
        <Tab $active>PROPERTIES</Tab>
        <PanelMenu aria-label="Panel menu"><MenuLines /></PanelMenu>
      </Strip>
      <DocInfo>
        <DocLogo>Fl</DocLogo>
        <DocNames><span>Document</span><span>Anime1</span></DocNames>
      </DocInfo>
      <SectionHead><Triangle />PUBLISH</SectionHead>
      <Block>
        <Field $h={26}><b>Player:</b><span>Flash Player 10</span></Field>
        <Field $h={27} $rule><b>Script:</b><span>ActionScript 3.0</span></Field>
        <Field $h={31} $rule $aside={56}>
          <label htmlFor="class">Class:</label>
          <ClassInput id="class" type="text" />
          <IconButton aria-label="Edit class"><Svg>{pencilShape}</Svg></IconButton>
        </Field>
        <Field $h={29} $rule><b>Profile:</b><span>Default</span><PushButton>Edit...</PushButton></Field>
      </Block>
      <Block>
        <Field $h={26} $wide><b>AIR Settings</b><PushButton disabled>Edit...</PushButton></Field>
        <Field $h={26} $wide><b>ActionScript Settings</b><PushButton>Edit...</PushButton></Field>
      </Block>
      <SectionHead><Triangle />PROPERTIES</SectionHead>
      <Block $end>
        <Field $h={28} $rule><b>FPS:</b><span><HotText href="#rate">24.00</HotText></span></Field>
        <Field $h={26} $rule><b>Size:</b><span>300 x 500 px</span><PushButton>Edit...</PushButton></Field>
        <Field $h={35}><label htmlFor="stage">Stage:</label><StageColor id="stage" /></Field>
      </Block>
      <SectionHead><Triangle />SWF HISTORY</SectionHead>
      <Block>
        <HistoryButtons><PushButton $w={35}>Log</PushButton><PushButton>Clear</PushButton></HistoryButtons>
        <History>
          <tbody>
            {[["644.9 KB", "7:11 PM"], ["644.5 KB", "7:08 PM"], ["644.5 KB", "7:06 PM"]].map(([s, t]) => (
              <tr key={t}><td>{s}</td><td>4/4/2011</td><td>{t}</td></tr>
            ))}
          </tbody>
        </History>
      </Block>
    </Dock>
  );
}

function ToolsPanel() {
  return (
    <Dock $w={28} $last>
      <DockBar><Collapse /></DockBar>
      <ToolTop />
      {toolGroups.map((g, i) => (
        <ToolGroup key={i} $gap={i === 3 ? 5 : 1}>
          {g.map((t) => (
            <ToolButton key={t} $active={t === "select"} aria-label={t}>
              {t === "text" ? <GlyphT>T</GlyphT> : tool(t)}
            </ToolButton>
          ))}
        </ToolGroup>
      ))}
      <ToolGroup $gap={5}>
        <ToolButton aria-label="Stroke color"><SmallPencil light /></ToolButton>
        <ColorSwatch aria-label="Stroke swatch" />
        <ToolButton aria-label="Fill color"><Svg w={16} h={16}><g transform="scale(.8)">{bucketShape}</g></Svg></ToolButton>
        <ColorSwatch aria-label="Fill swatch" />
        <ToolButton $h={18} aria-label="Black and white">
          <Svg w={14} h={14}><path d="M5.500 5.500H11.500V11.500H5.500Z" fill="#fff" stroke="#666" /><path d="M1 2H8V9H1Z" fill="#111" /></Svg>
        </ToolButton>
        <ToolButton $h={16} aria-label="Swap colors">
          <Svg w={14} h={14}>
            <path d="M1 1H5V5H1ZM6 1H8V5H6Z" fill="#111" /><path d="M1.500 7.500H5.500V11.500H1.500Z" fill="#fff" stroke="#444" />
            <path d="M9 3.500Q12.500 4 12 7Q12 10 9 10.500" stroke="#222" /><path d="M10 1V6L7 3.500ZM10 8V13L7 10.500Z" fill="#222" />
          </Svg>
        </ToolButton>
      </ToolGroup>
      <ToolGroup $end>
        {(["magnet", "smooth", "straighten"] as const).map((t) => (
          <ToolButton key={t} aria-label={t}>{tool(t)}</ToolButton>
        ))}
      </ToolGroup>
    </Dock>
  );
}

export default function App() {
  return (
    <>
      <Global />
      <Window>
        <TopBar />
        <Body>
          <Main>
            <DocumentArea />
            <TimelinePanel />
          </Main>
          <Dock $w={36}>
            <DockBar><Collapse left /></DockBar>
            {railGroups.map((g) => (
              <RailGroup key={g[0]}>
                <RailGrip />
                {g.map((n) => <RailButton key={n} aria-label={n}><Svg>{railIcons[n]}</Svg></RailButton>)}
              </RailGroup>
            ))}
            <RailRest />
          </Dock>
          <PropertiesPanel />
          <ToolsPanel />
        </Body>
      </Window>
      <svg width="0" height="0" aria-hidden="true" display="none">
        <defs>
          <radialGradient id="ball" cx=".4" cy=".3"><stop offset="0" stopColor="#fff" /><stop offset="1" stopColor="#888" /></radialGradient>
          <linearGradient id="dark" x1="0" y1="0" x2="0" y2="1"><stop offset="0" stopColor="#8a8a8a" /><stop offset="1" stopColor="#1c1c1c" /></linearGradient>
        </defs>
      </svg>
    </>
  );
}
